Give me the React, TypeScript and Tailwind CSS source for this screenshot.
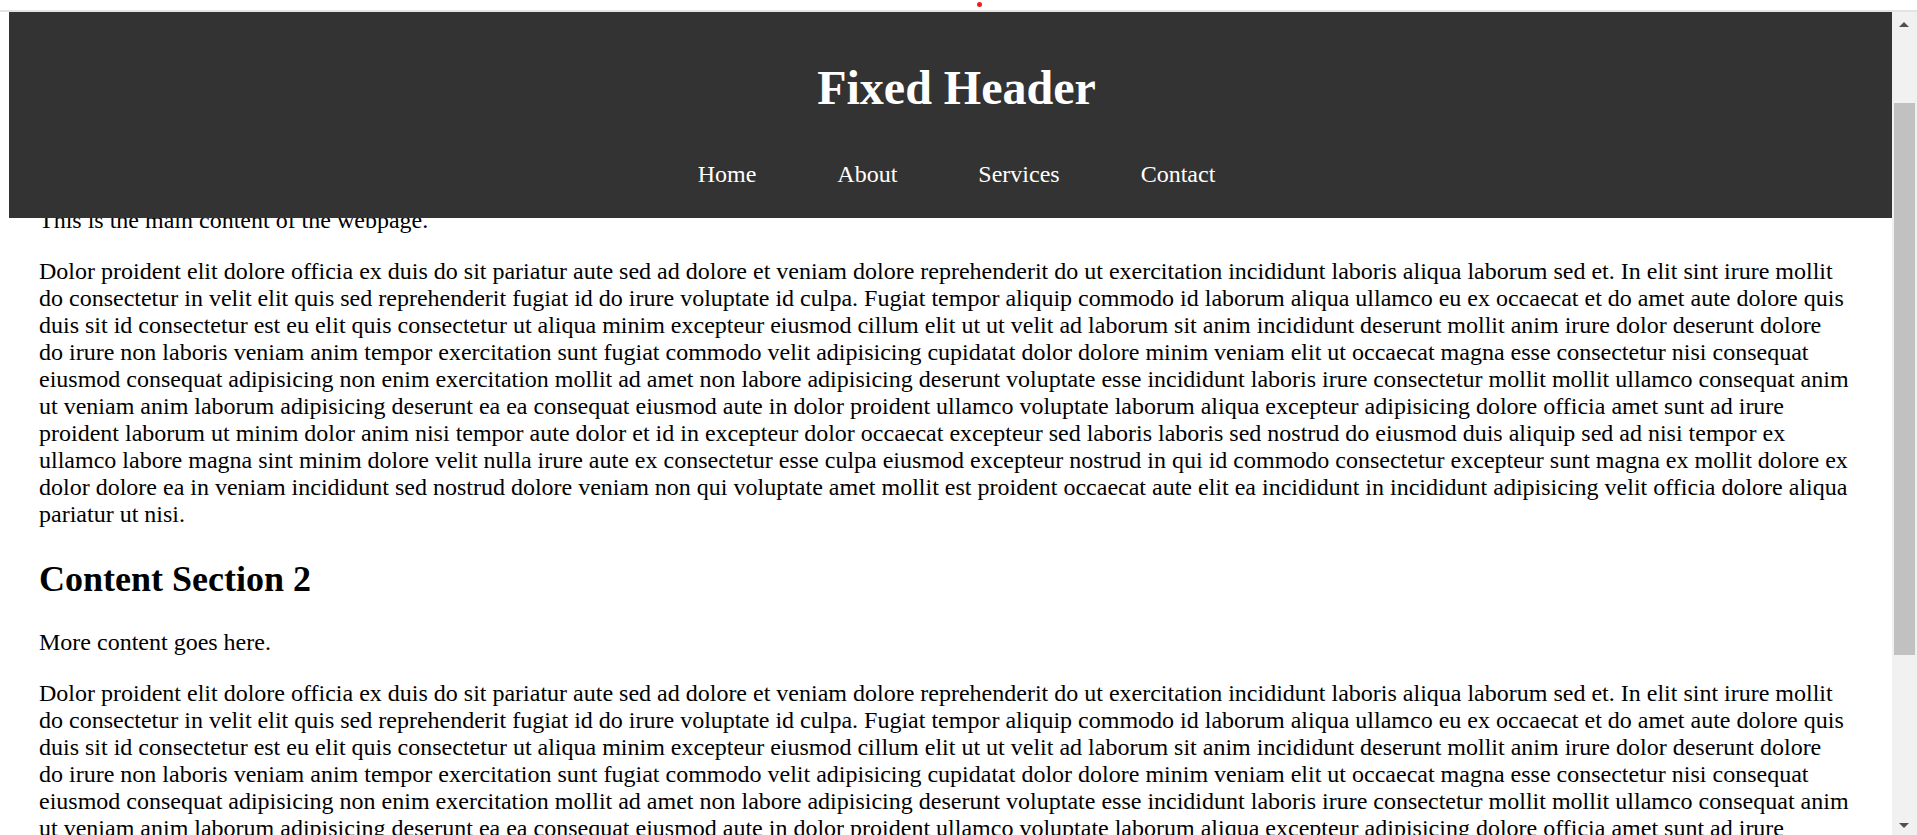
import React from "react";

const LOREM =
  "Dolor proident elit dolore officia ex duis do sit pariatur aute sed ad dolore et veniam dolore reprehenderit do ut exercitation incididunt laboris aliqua laborum sed et. In elit sint irure mollit do consectetur in velit elit quis sed reprehenderit fugiat id do irure voluptate id culpa. Fugiat tempor aliquip commodo id laborum aliqua ullamco eu ex occaecat et do amet aute dolore quis duis sit id consectetur est eu elit quis consectetur ut aliqua minim excepteur eiusmod cillum elit ut ut velit ad laborum sit anim incididunt deserunt mollit anim irure dolor deserunt dolore do irure non laboris veniam anim tempor exercitation sunt fugiat commodo velit adipisicing cupidatat dolor dolore minim veniam elit ut occaecat magna esse consectetur nisi consequat eiusmod consequat adipisicing non enim exercitation mollit ad amet non labore adipisicing deserunt voluptate esse incididunt laboris irure consectetur mollit mollit ullamco consequat anim ut veniam anim laborum adipisicing deserunt ea ea consequat eiusmod aute in dolor proident ullamco voluptate laborum aliqua excepteur adipisicing dolore officia amet sunt ad irure proident laborum ut minim dolor anim nisi tempor aute dolor et id in excepteur dolor occaecat excepteur sed laboris laboris sed nostrud do eiusmod duis aliquip sed ad nisi tempor ex ullamco labore magna sint minim dolore velit nulla irure aute ex consectetur esse culpa eiusmod excepteur nostrud in qui id commodo consectetur excepteur sunt magna ex mollit dolore ex dolor dolore ea in veniam incididunt sed nostrud dolore veniam non qui voluptate amet mollit est proident occaecat aute elit ea incididunt in incididunt adipisicing velit officia dolore aliqua pariatur ut nisi.";

export default function App() {
  return (
    <div className="w-[1917px] h-[835px] overflow-hidden bg-white flex flex-col font-[family-name:'Liberation_Serif','Times_New_Roman',serif]">
      {/* top strip */}
      <div className="h-[10px] relative shrink-0">
        <div className="absolute left-[977px] top-[2px] w-[5px] h-[5px] rounded-full bg-[#f01c1c]" />
      </div>
      <div className="h-[2px] bg-[#e3e3e3] shrink-0" />
      <div className="flex flex-1 min-h-0">
        <div className="w-[9px] shrink-0 bg-white" />
        {/* viewport */}
        <div className="relative flex-1 overflow-hidden bg-white text-black">
          <div className="pl-[30px] pr-[42px] pt-[194.7px] text-[24px] leading-[27px]">
            <p className="mb-[24px]">This is the main content of the webpage.</p>
            <p>{LOREM}</p>
            <h2 className="mt-[31px] mb-[30.5px] text-[36px] leading-[40px] font-bold">
              Content Section 2
            </h2>
            <p className="mb-[24px]">More content goes here.</p>
            <p>{LOREM}</p>
          </div>
          {/* fixed header overlay */}
          <header className="absolute top-0 left-0 right-0 h-[206px] bg-[#333333] text-white pl-[12px] pt-[48.5px]">
            <h1 className="text-center text-[48px] leading-[53px] font-bold">Fixed Header</h1>
            <nav className="mt-[47.2px] flex justify-center gap-[81px] text-[24px] leading-[27px]">
              <a>Home</a>
              <a>About</a>
              <a>Services</a>
              <a>Contact</a>
            </nav>
          </header>
        </div>
        {/* scrollbar */}
        <div className="w-[25px] shrink-0 bg-[#f1f1f1] flex flex-col items-center">
          <svg width="10" height="5" viewBox="0 0 10 5" className="mt-[10px] ml-[-1px]">
            <polygon points="0,5 5,0 10,5" fill="#505050" />
          </svg>
          <div className="mt-[76px] w-[21px] h-[552px] bg-[#c1c1c1]" />
          <svg width="10" height="5" viewBox="0 0 10 5" className="mt-[168px] ml-[-1px]">
            <polygon points="0,0 10,0 5,5" fill="#505050" />
          </svg>
        </div>
      </div>
    </div>
  );
}
